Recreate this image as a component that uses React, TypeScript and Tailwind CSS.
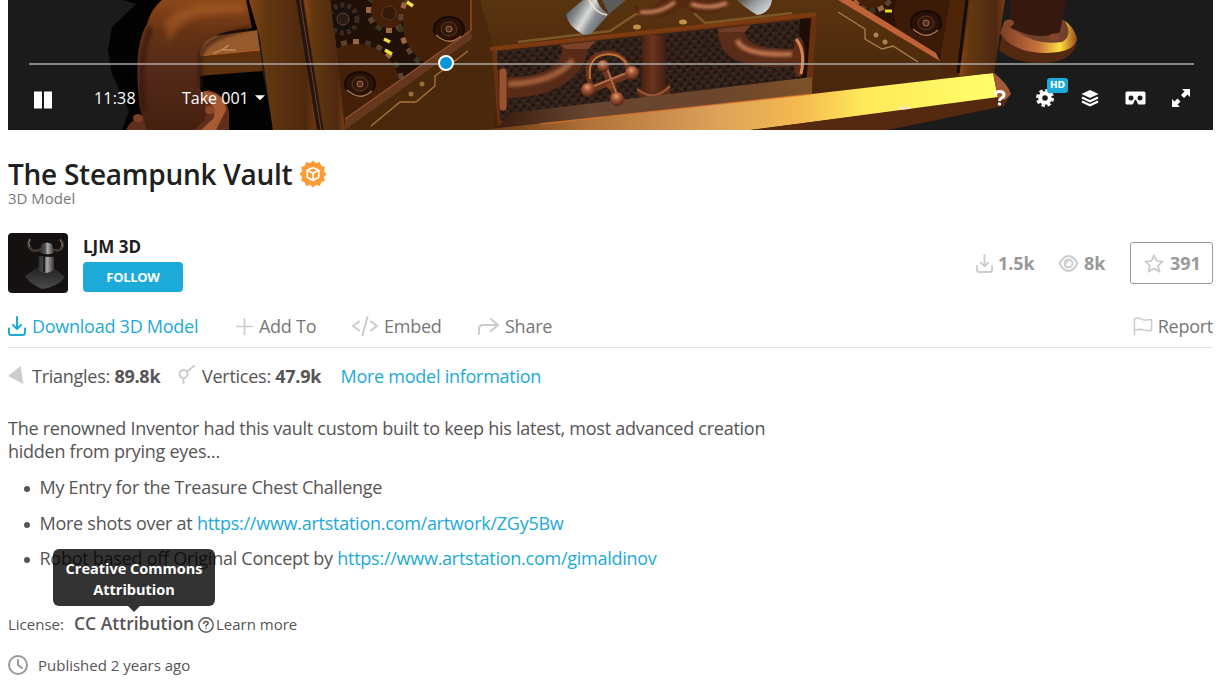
import type { ReactNode } from "react";

const links = {
  artwork: "https://www.artstation.com/artwork/ZGy5Bw",
  artist: "https://www.artstation.com/gimaldinov",
};

function Gear({ cx, cy, r, teeth }: { cx: number; cy: number; r: number; teeth: number }) {
  return (
    <g>
      {Array.from({ length: teeth }, (_, i) => (
        <rect
          key={i}
          x={cx - 3}
          y={cy - r - 5}
          width="6"
          height="9"
          fill={i % 3 === 0 ? "#9a6543" : i % 3 === 1 ? "#39351f" : "#5c4230"}
          transform={`rotate(${(360 / teeth) * i} ${cx} ${cy})`}
        />
      ))}
      <circle cx={cx} cy={cy} r={r} fill="#442009" />
    </g>
  );
}

function Bolt({ cx, cy }: { cx: number; cy: number }) {
  return (
    <g>
      <ellipse cx={cx} cy={cy} rx="15" ry="12" fill="#2a1208" stroke="#160a04" strokeWidth="2" />
      <path d={`M${cx - 13} ${cy + 6}Q${cx} ${cy + 18} ${cx + 12} ${cy + 7}`} fill="none" stroke="#b27649" strokeWidth="1.5" />
      <ellipse cx={cx} cy={cy} rx="8" ry="7" fill="#33180c" stroke="#5c3822" />
      <circle cx={cx} cy={cy} r="3" fill="#543020" stroke="#a16b4b" />
    </g>
  );
}

// Rendered frame of the vault
function VaultScene() {
  return (
    <svg className="block h-[130px] w-full" viewBox="8 0 1205 130" preserveAspectRatio="none" aria-hidden="true">
      <defs>
        <linearGradient id="pipe" x1="0" x2="1">
          <stop offset="0" stopColor="#3d1a0e" />
          <stop offset=".45" stopColor="#6b351d" />
          <stop offset="1" stopColor="#32160d" />
        </linearGradient>
        <linearGradient id="elbow" x1="0" y1="0" x2="0" y2="1">
          <stop offset="0" stopColor="#8c4719" />
          <stop offset=".25" stopColor="#653214" />
          <stop offset=".55" stopColor="#542a1a" />
          <stop offset="1" stopColor="#45200f" />
        </linearGradient>
        <linearGradient id="panel" x1="0" y1="0" x2="0" y2="1">
          <stop offset="0" stopColor="#593411" />
          <stop offset="1" stopColor="#432108" />
        </linearGradient>
        <linearGradient id="column" x1="0" x2="1">
          <stop offset="0" stopColor="#8a4315" />
          <stop offset=".2" stopColor="#65390f" />
          <stop offset=".8" stopColor="#4d290f" />
          <stop offset="1" stopColor="#7c3d12" />
        </linearGradient>
        <linearGradient id="plate" x1="480" x2="1000" y1="0" y2="0" gradientUnits="userSpaceOnUse">
          <stop offset="0" stopColor="#5e310f" />
          <stop offset=".2" stopColor="#b07038" />
          <stop offset=".45" stopColor="#dca05a" />
          <stop offset=".62" stopColor="#f6bb50" />
          <stop offset=".74" stopColor="#ffe95a" />
          <stop offset="1" stopColor="#ffff6a" />
        </linearGradient>
        <linearGradient id="ledge" x1="0" x2="1">
          <stop offset="0" stopColor="#3a1c0d" />
          <stop offset=".3" stopColor="#684632" />
          <stop offset=".7" stopColor="#6d452c" />
          <stop offset="1" stopColor="#7c5227" />
        </linearGradient>
        <linearGradient id="steel" x1="568" y1="8" x2="602" y2="28" gradientUnits="userSpaceOnUse">
          <stop offset="0" stopColor="#55585a" />
          <stop offset=".25" stopColor="#898d90" />
          <stop offset=".5" stopColor="#dadbd8" />
          <stop offset=".7" stopColor="#8a8e92" />
          <stop offset="1" stopColor="#63666a" />
        </linearGradient>
        <linearGradient id="steelRight" x1="0" x2="1" y1="0" y2=".5">
          <stop offset="0" stopColor="#5b4e40" />
          <stop offset=".5" stopColor="#9a9fa3" />
          <stop offset="1" stopColor="#d5d7d8" />
        </linearGradient>
        <linearGradient id="flange" x1="0" x2="1">
          <stop offset="0" stopColor="#7a3c26" />
          <stop offset=".5" stopColor="#c9733e" />
          <stop offset=".78" stopColor="#ffdf43" />
          <stop offset="1" stopColor="#9a481d" />
        </linearGradient>
        <radialGradient id="knob" cx=".45" cy=".3" r=".7">
          <stop offset="0" stopColor="#e79c70" />
          <stop offset=".4" stopColor="#a5583a" />
          <stop offset="1" stopColor="#4d2111" />
        </radialGradient>
        <pattern id="mesh" width="9" height="9" patternUnits="userSpaceOnUse" patternTransform="rotate(-6)">
          <rect width="9" height="9" fill="#30201a" />
          <circle cx="2" cy="2.500" r="1.600" fill="#1f130e" />
          <circle cx="6.500" cy="7" r="1.600" fill="#1f130e" />
          <path d="M0 5L2 7L4 5M5 1L6.500 2.500L8.500 .5" stroke="#4b3223" fill="none" />
        </pattern>
        <clipPath id="leftRoom"><path d="M330 0H472V32L346 120Z" /></clipPath>
        <clipPath id="rightRoom"><path d="M851 0H956L942 60L936 53Z" /></clipPath>
        <filter id="soft" x="-30%" y="-60%" width="160%" height="220%"><feGaussianBlur stdDeviation="3" /></filter>
        <filter id="sheen" x="-20%" y="-40%" width="140%" height="180%"><feGaussianBlur stdDeviation="1.5" /></filter>
      </defs>

      <rect x="8" width="1205" height="130" fill="#1b1b1b" />
      <path d="M123 0L136 4L112 27L108 50L112 74L129 111L122 130H240L262 0Z" fill="#030303" />
      <path d="M200 74L262 68L273 130H222Z" fill="#030303" />

      {/* left pipe and its flange */}
      <path d="M198 38L257 30L260 50L198 57Z" fill="#975a2d" />
      <path d="M198 56L260 50L263 71L198 76Z" fill="#5d300e" />
      <path d="M198 56L260 50" stroke="#b85f22" />
      <path d="M213 53Q220 52 229 45M223 50H236" stroke="#c58a5c" strokeWidth="1.500" fill="none" />
      <path d="M126 130Q130 120 142 116L208 90Q226 94 229 111L229 130Z" fill="#5f2f1c" />
      <path d="M204 91Q225 93 226 110L216 130H201L214 118Q216 103 203 99Z" fill="#a85a33" />
      <path d="M162 0H246L252 28C217 32 201 38 200 55V88Q207 104 205 120L194 130H147L140 109C137 80 134 45 147 24Q151 9 162 0Z" fill="url(#elbow)" />
      <path d="M164 22Q180 6 204 4L246 4V12L205 15Q180 18 169 43Z" fill="#ba6b2d" opacity=".45" filter="url(#soft)" />
      <path d="M144 112Q137 60 151 27" stroke="#331509" strokeWidth="6" fill="none" opacity=".6" filter="url(#sheen)" />
      <path d="M200 88V58Q202 38 250 28" stroke="#331509" strokeWidth="5" fill="none" opacity=".6" filter="url(#sheen)" />
      <ellipse cx="210" cy="110" rx="5" ry="4" fill="#8c4527" />
      <ellipse cx="138" cy="118" rx="5" ry="4" fill="#7e3e27" />

      {/* vault front */}
      <path d="M249 0H1004L994 75L1010 97L860 130H273L260 38Z" fill="url(#panel)" />
      <path d="M249 0H296L320 130H273L260 38Z" fill="url(#column)" />
      <path d="M296 0H303L323 130H317Z" fill="#29150e" />
      <path d="M300 0L321 130" stroke="#634637" />
      <path d="M304 0H329L345 130H324Z" fill="url(#column)" />

      {/* left clockwork */}
      <g clipPath="url(#leftRoom)">
        <path d="M330 0H472V32L346 120Z" fill="#211008" />
        <Gear cx={389} cy={10} r={18} teeth={12} />
        <circle cx="389" cy="13" r="7" fill="#351a0c" stroke="#5b351f" />
        <Gear cx={356} cy={88} r={44} teeth={24} />
        <Gear cx={450} cy={23} r={47} teeth={26} />
        <circle cx="343" cy="19" r="14" fill="#18100c" stroke="#3c2a20" strokeWidth="5" strokeDasharray="4 3" />
        <circle cx="343" cy="19" r="6" fill="#2d1c15" stroke="#65442e" />
        <Bolt cx={360} cy={84} />
        <Bolt cx={449} cy={29} />
        <path d="M384 39L390 42M385 50L392 54M407 2L413 6" stroke="#ede13b" strokeWidth="3.500" />
      </g>
      <path d="M470 0V32L345 119V130H495V52L480 0Z" fill="#49280c" />
      <path d="M471 0V31" stroke="#82401b" strokeWidth="2" />
      <path d="M470 31L345 119V130L473 38Z" fill="#65371c" />
      <path d="M470 31L345 119" stroke="#8f512b" strokeWidth="1.500" />
      <path d="M468 51L435 76V86L416 102H400L371 126" fill="none" stroke="#a9753b" strokeWidth="1.300" />
      <circle cx="422" cy="84" r="2.500" fill="#9d6b37" />
      <circle cx="411" cy="94" r="2.500" fill="#9d6b37" />

      {/* recessed mesh */}
      <path d="M492 50L817 14L812 90L498 128Z" fill="#6a310e" />
      <path d="M497 51L806 19L806 86L500 121Z" fill="url(#mesh)" />
      <path d="M800 19L811 18L806 88L797 80Z" fill="#1d0e07" />
      <path d="M490 49L816 14" stroke="#7d3b11" strokeWidth="4" fill="none" />
      <path d="M518 42L610 31L636 14H650M694 13L705 23L792 13" fill="none" stroke="#7d5726" strokeWidth="2.500" />
      <ellipse cx="637" cy="27" rx="4" ry="2.500" fill="#c09149" />
      <ellipse cx="683" cy="22" rx="4" ry="2.500" fill="#c09149" />

      <path d="M562 46H588C587 76 556 98 506 98V77C542 77 563 68 562 46Z" fill="#582b18" />
      <path d="M508 84Q554 83 573 60" stroke="#c27748" strokeWidth="6" fill="none" opacity=".65" filter="url(#sheen)" />
      <path d="M560 45L596 41L588 49H566Z" fill="#7b4229" />
      <rect x="499" y="68" width="8" height="43" rx="4" fill="#99522f" stroke="#582812" />
      <path d="M642 35H666V82Q672 90 670 98Q653 108 638 96Q636 90 642 84Z" fill="url(#pipe)" />
      <path d="M637 87Q654 100 670 84V95Q654 109 637 94Z" fill="#5f2c17" />
      <path d="M637 89Q654 103 670 86" stroke="#9b5738" strokeWidth="2" fill="none" />
      <path d="M718 29H744C744 42 755 49 794 49V66C746 70 718 61 718 29Z" fill="#5a2c1a" />
      <path d="M737 40Q743 56 792 54" stroke="#dc8a5c" strokeWidth="5" fill="none" opacity=".75" filter="url(#sheen)" />
      <path d="M717 29L751 25L745 32H720Z" fill="#713b25" />
      <ellipse cx="799" cy="57" rx="6" ry="20" fill="#612d16" />
      <path d="M796 39Q806 51 801 74" stroke="#d68455" strokeWidth="3" fill="none" />
      <path d="M510 113L812 77V99L495 130Z" fill="url(#ledge)" />

      {/* valve wheel */}
      <path d="M591 86Q580 54 609 53Q626 54 630 74" fill="none" stroke="#6d321b" strokeWidth="5" />
      <path d="M590 79Q587 55 609 54Q623 55 627 65" fill="none" stroke="#bd7434" strokeWidth="2" />
      <path d="M589 90L631 74M604 67L617 98" stroke="#6d341e" strokeWidth="7" />
      <path d="M589 88L629 72M606 66L617 95" stroke="#b4694a" strokeWidth="2" />
      <circle cx="610" cy="86" r="3" fill="#90421f" />
      <circle cx="603" cy="66" r="6" fill="url(#knob)" />
      <circle cx="632" cy="73" r="7" fill="url(#knob)" />
      <circle cx="588" cy="90" r="7" fill="url(#knob)" />
      <circle cx="617" cy="99" r="7" fill="url(#knob)" />

      {/* steel arms */}
      <path d="M602 0H626L609 14Z" fill="#5c5b59" />
      <path d="M583 0H597Q601 11 609 14L592 33Q587 36 582 34Q567 25 566 14Z" fill="url(#steel)" />
      <path d="M589 0Q596 14 607 15" stroke="#f1e4d0" strokeWidth="1.500" fill="none" />
      <path d="M737 0H772Q770 13 757 15Q744 7 737 0Z" fill="url(#steelRight)" />
      <path d="M634 5Q648 13 661 0H730Q726 14 704 14Q690 13 684 6Q665 22 641 16Q634 12 634 5Z" fill="#54290f" />
      <path d="M640 12Q660 14 675 2M691 4Q708 10 727 3" stroke="#c67e5b" strokeWidth="4" fill="none" filter="url(#sheen)" />

      {/* lower front plate */}
      <path d="M480 130L812 94L993 73L998 98L750 130Z" fill="url(#plate)" />
      <path d="M540 124L812 94" stroke="#d9732c" strokeWidth="1.500" opacity=".7" />
      <path d="M750 130L998 97L1010 95L1004 106L888 130Z" fill="#55290f" />
      <path d="M993 72Q1008 84 1011 94L1005 100L998 98Z" fill="#a05a37" />
      <ellipse cx="904" cy="108" rx="7" ry="1.500" fill="#ffe2c0" />

      {/* right clockwork */}
      <path d="M850 0H964L957 73L940 60Z" fill="#2b1307" />
      <g clipPath="url(#rightRoom)">
        <Gear cx={872} cy={-10} r={18} teeth={14} />
        <circle cx="934" cy="14" r="40" fill="#3b1a08" />
        <Bolt cx={926} cy={23} />
        <path d="M885 11H892" stroke="#e2de27" strokeWidth="3" />
      </g>
      <path d="M838 0H851L936 53L940 61Z" fill="#bf6238" />
      <path d="M838 12L865 29V39L882 49L893 46L918 62" fill="none" stroke="#a9824b" strokeWidth="1.300" />
      <circle cx="876" cy="35" r="2.500" fill="#aa8551" />
      <circle cx="885" cy="42" r="2.500" fill="#aa8551" />
      <path d="M950 0H967L958 74L944 76L940 60Z" fill="#4d260a" />
      <path d="M971 0H1005L994 73L959 76Z" fill="url(#column)" />
      <path d="M967 0L958 73" stroke="#160c07" strokeWidth="3" />

      {/* right pipe foot */}
      <path d="M1003 30L999 50Q1015 64 1045 63Q1076 61 1077 39Z" fill="#532911" />
      <path d="M1004 22L1000 33Q1012 53 1047 53Q1076 52 1077 38Q1073 25 1063 20Z" fill="url(#flange)" />
      <path d="M1005 22Q1030 47 1062 42Q1074 35 1064 20Z" fill="#714229" />
      <path d="M1010 0H1066L1060 32Q1045 39 1026 34L1011 28Z" fill="#36180f" />
      <ellipse cx="1009" cy="23" rx="5" ry="3.500" fill="#87452e" />
      <ellipse cx="1054" cy="37" rx="5" ry="3.500" fill="#87452e" />
    </svg>
  );
}

function PlayerControls() {
  return (
    <div className="absolute inset-x-0 top-[54px] h-[76px] text-white">
      <div className="mr-[19px] ml-[21px] flex h-[20px] items-center">
        <div className="relative h-[2px] w-full bg-[#aaa]/75">
          <span className="absolute top-[-8px] left-[409px] h-[16px] w-[16px] rounded-full border-2 border-white bg-[#0896d8]" />
        </div>
      </div>
      <div className="flex h-[48px] items-center pr-[23px] pl-[26px] text-[16px]">
        <svg className="mt-[4px] h-[18px] w-[18px]" viewBox="0 0 18 18" fill="currentColor">
          <path d="M0 .5H8V17.500H0ZM10 .5H18V17.500H10Z" />
        </svg>
        <span className="ml-[42px] w-[88px] tracking-[0.2px]">11:38</span>
        <span>Take 001</span>
        <svg className="ml-[6px] h-[6px] w-[10px]" viewBox="0 0 11 6" fill="currentColor">
          <path d="M0 0H11L5.500 5.500Z" />
        </svg>
        <div className="ml-auto flex items-center">
          <svg className="h-[18px] w-[12px]" viewBox="0 0 12 18" fill="none" stroke="currentColor">
            <path d="M1.500 6Q1.500 2.500 5.500 2.500Q10 2.500 10 6Q10 8 7 9.500Q5.500 10.500 5.500 12" strokeWidth="3" />
            <circle cx="5.500" cy="15" r="1.700" fill="currentColor" stroke="none" />
          </svg>
          <span className="relative ml-[30px]">
            <svg className="h-[18px] w-[18px]" viewBox="0 0 18 18" fill="none" stroke="currentColor">
              <circle cx="9" cy="9" r="4.800" strokeWidth="4" />
              <circle cx="9" cy="9" r="7.700" strokeWidth="2.600" strokeDasharray="3.500 2.547" />
            </svg>
            <span className="absolute top-[-11px] left-[11px] flex h-[15px] w-[21px] items-center justify-center rounded-[3px] bg-[#1caad9] font-['DejaVu_Sans'] text-[9px] font-bold">
              HD
            </span>
          </span>
          <svg className="ml-[27px] h-[18px] w-[18px]" viewBox="0 0 18 18">
            <path d="M9 1L17.500 5L9 9L.500 5Z" fill="currentColor" />
            <path d="M1 8.500L9 12.200L17 8.500M1 12.500L9 16.200L17 12.500" fill="none" stroke="currentColor" strokeWidth="2.300" />
          </svg>
          <svg className="ml-[26px] h-[14px] w-[21px]" viewBox="0 0 21 14" fill="currentColor">
            <path fillRule="evenodd" d="M2 .5H19Q20.500 .5 20.500 2V12Q20.500 13.500 19 13.500H14Q13 13.500 12.500 12L11.500 9.500Q10.500 8 9.500 9.500L8.500 12Q8 13.500 7 13.500H2Q.500 13.500 .500 12V2Q.500 .5 2 .5ZM6 4.500A2.500 2.500 0 1 0 6 9.500A2.500 2.500 0 1 0 6 4.500M15 4.500A2.500 2.500 0 1 0 15 9.500A2.500 2.500 0 1 0 15 4.500" />
          </svg>
          <svg className="ml-[26px] h-[18px] w-[18px]" viewBox="0 0 18 18">
            <path d="M10 0H18V8L15.500 5.500L12 9L9 6L12.500 2.500ZM8 18H0V10L2.500 12.500L5.500 9.500L8.500 12.500L5.500 15.500Z" fill="currentColor" />
          </svg>
        </div>
      </div>
    </div>
  );
}

function Icon({ className, box = "0 0 20 20", children }: { className: string; box?: string; children: ReactNode }) {
  return (
    <svg className={className} viewBox={box} fill="none" stroke="currentColor" strokeWidth="2" strokeLinecap="round" strokeLinejoin="round" aria-hidden="true">
      {children}
    </svg>
  );
}

function DownloadIcon({ className }: { className: string }) {
  return (
    <Icon className={className} box="0 0 18 20">
      <path d="M9 1V13M5 9L9 13L13 9M1 12.500V16.500Q1 19 3.500 19H14.500Q17 19 17 16.500V12.500" />
    </Icon>
  );
}

function StaffPickBadge() {
  return (
    <svg className="ml-[7px] h-[28px] w-[28px]" viewBox="0 0 28 28" aria-label="Staff pick">
      <path
        d="M14 .5L17 3.200L20.800 2L22.300 5.700L26 7.200L24.800 11L27.500 14L24.800 17L26 20.800L22.300 22.300L20.800 26L17 24.800L14 27.500L11 24.800L7.200 26L5.700 22.300L2 20.800L3.200 17L.500 14L3.200 11L2 7.200L5.700 5.700L7.200 2L11 3.200Z"
        fill="#ff9b35"
      />
      <path d="M14 7.700L19.800 10.200V17.300L14 20.400L8.200 17.300V10.200ZM8.200 10.200L14 13.200L19.800 10.200M14 13.200V20.400" fill="none" stroke="#fff" strokeWidth="1.700" strokeLinejoin="round" />
    </svg>
  );
}

function Avatar() {
  return (
    <svg className="h-[60px] w-[60px] rounded-[4px]" viewBox="0 0 60 60" aria-hidden="true">
      <defs>
        <linearGradient id="helmet" x1="0" x2="1">
          <stop offset="0" stopColor="#2b2c2c" />
          <stop offset=".4" stopColor="#4b4d4e" />
          <stop offset=".57" stopColor="#aaa" />
          <stop offset="1" stopColor="#333" />
        </linearGradient>
        <linearGradient id="cape" x1="0" y1="0" x2="0" y2="1">
          <stop offset="0" stopColor="#222" />
          <stop offset="1" stopColor="#4a4b4a" />
        </linearGradient>
      </defs>
      <rect width="60" height="60" fill="#151110" />
      <path d="M22 6Q18 13 24 17Q28 19 33 16M52 6Q57 12 53 16Q49 19 44 16" fill="none" stroke="#453a33" strokeWidth="2.500" />
      <path d="M22 6Q19 10 22 14M52 7Q55 10 54 14" fill="none" stroke="#85776b" />
      <path d="M28 35L17 43Q22 51 34 56Q50 54 57 44L46 35Z" fill="url(#cape)" />
      <path d="M31 23L46 24V37Q38 43 30 37Z" fill="url(#helmet)" />
      <path d="M34 11Q38 8 44 11L46 20Q38 23 31 19Z" fill="url(#helmet)" />
      <path d="M29 21Q38 24 47 22M36 23V39" stroke="#101010" strokeWidth="1.500" fill="none" />
    </svg>
  );
}

function ModelHeader() {
  return (
    <header>
      <div className="mt-[26px] flex h-[36px] items-center">
        <h1 className="text-[28px] leading-[32px] font-semibold tracking-[-0.26px] whitespace-nowrap text-[#202020]">The Steampunk Vault</h1>
        <StaffPickBadge />
      </div>
      <p className="mt-[-4px] h-[20px] text-[15px] leading-[20px] text-[#777]">3D Model</p>
      <div className="mt-[25px] flex h-[60px]">
        <Avatar />
        <div className="ml-[15px]">
          <p className="mt-[3px] h-[22px] text-[17px] leading-[22px] font-bold text-[#202020]">LJM 3D</p>
          <button className="mt-[4px] block h-[30px] w-[100px] rounded-[4px] bg-[#1caad9] pt-px text-[13px] font-bold tracking-[-0.3px] text-white">FOLLOW</button>
        </div>
        <div className="mt-[9px] ml-auto flex h-[42px] items-center text-[18px] font-bold tracking-[-0.1px] text-[#999]">
          <DownloadIcon className="mr-[5px] h-[19px] w-[17px] text-[#ccc]" />
          <span className="w-[60px]">1.5k</span>
          <Icon className="mr-[5px] h-[17px] w-[21px] text-[#ccc]" box="0 0 20 17">
            <path d="M1 8.500Q5 1 10 1T19 8.500Q15 16 10 16T1 8.500Z" />
            <circle cx="10" cy="8.500" r="4" />
            <path d="M8 8.500Q8 6.500 10 6.500" strokeWidth="1.200" />
          </Icon>
          <span className="w-[46px]">8k</span>
          <button className="flex h-[42px] w-[83px] items-center rounded-[3px] border border-[#999] pl-[13px]">
            <Icon className="mr-[6px] h-[19px] w-[20px] text-[#ccc]">
              <path d="M10 1.500L12.700 7.200L19 8L14.300 12.200L15.600 18.500L10 15.300L4.400 18.500L5.700 12.200L1 8L7.300 7.200Z" />
            </Icon>
            391
          </button>
        </div>
      </div>
    </header>
  );
}

function ActionBar() {
  return (
    <nav className="mt-[12px] flex h-[43px] items-center border-b border-[#e5e5e5] text-[18px] tracking-[-0.26px] whitespace-nowrap text-[#777]">
      <a className="flex w-[228px] items-center text-[#1caad9]">
        <DownloadIcon className="mr-[6px] h-[20px] w-[18px]" />
        Download 3D Model
      </a>
      <a className="flex w-[116px] items-center">
        <Icon className="mr-[6px] h-[17px] w-[17px] text-[#ccc]">
          <path d="M10 1V19M1 10H19" />
        </Icon>
        Add To
      </a>
      <a className="flex w-[126px] items-center">
        <Icon className="mr-[6px] h-[20px] w-[26px] text-[#ccc]" box="0 0 26 20">
          <path d="M7 5.500L1 10L7 14.500M15.500 1L10.500 19M19 5.500L25 10L19 14.500" />
        </Icon>
        Embed
      </a>
      <a className="flex items-center">
        <Icon className="mr-[6px] h-[19px] w-[21px] text-[#ccc]" box="0 0 21 19">
          <path d="M1 17V12Q1 8 5 8H20M13 2L20 8L13 14" />
        </Icon>
        Share
      </a>
      <a className="ml-auto flex items-center">
        <Icon className="mr-[5px] h-[19px] w-[20px] text-[#ccc]">
          <path d="M1 19V2Q4 0 8 2T14 3H19V14Q16 15 12 14T6 13L1 14" strokeWidth="1.600" />
        </Icon>
        Report
      </a>
    </nav>
  );
}

export default function App() {
  return (
    <main className="h-[684px] overflow-hidden bg-white pr-[9px] pl-[8px] font-['Open_Sans',sans-serif] text-[#555]">
      <section className="relative h-[130px] overflow-hidden">
        <VaultScene />
        <PlayerControls />
      </section>
      <ModelHeader />
      <ActionBar />

      <section className="mt-[16px] flex h-[25px] items-center text-[18px] tracking-[-0.26px] whitespace-nowrap">
        <svg className="mr-[8px] mb-[4px] h-[20px] w-[16px] text-[#ccc]" viewBox="0 0 16 20" fill="currentColor">
          <path d="M0 11L12.500 1L15.500 19Z" />
        </svg>
        <span className="w-[146px]">Triangles: <b>89.8k</b></span>
        <Icon className="mr-[7px] mb-[4px] h-[19px] w-[17px] text-[#ccc]" box="0 0 17 19">
          <circle cx="5.500" cy="9" r="4" />
          <path d="M5.500 13V18M9 6.500L16 1" />
        </Icon>
        <span className="w-[138.500px]">Vertices: <b>47.9k</b></span>
        <a className="text-[#1caad9]">More model information</a>
      </section>

      <article className="mt-[28px] h-[153px] w-[780px] text-[18px] leading-[23px] tracking-[-0.26px] whitespace-nowrap">
        <p>
          The renowned Inventor had this vault custom built to keep his latest, most advanced creation
          <br />
          hidden from prying eyes…
        </p>
        <ul className="mt-[13px] space-y-[12.500px]">
          {[
            <>My Entry for the Treasure Chest Challenge</>,
            <>More shots over at <a className="text-[#1caad9]">{links.artwork}</a></>,
            <>Robot based off Original Concept by <a className="text-[#1caad9]">{links.artist}</a></>,
          ].map((item, i) => (
            <li key={i} className="flex items-center">
              <span className="mt-[3px] mr-[9.500px] ml-[16px] h-[6px] w-[6px] rounded-full bg-[#555]" />
              <span>{item}</span>
            </li>
          ))}
        </ul>
      </article>

      <footer className="mt-[43px] text-[15px]">
        <div className="flex h-[22px] items-center whitespace-nowrap">
          <span className="w-[66px]">License:</span>
          <span className="relative mt-[-1px] w-[120px] text-[17.500px] font-semibold">
            CC Attribution
            <span className="absolute bottom-[31px] left-[-21px] flex h-[57px] w-[162px] flex-col items-center justify-center rounded-[6px] bg-black/80 pt-[3px] text-[14.500px] leading-[21px] font-bold text-white">
              <span>Creative Commons</span>
              <span>Attribution</span>
              <svg className="absolute top-[57px] left-[75px] h-[6px] w-[12px]" viewBox="0 0 12 6">
                <path d="M0 0H12L6 6Z" fill="#333" />
              </svg>
            </span>
          </span>
          <Icon className="mt-px mr-[2px] ml-[4px] h-[16px] w-[16px]" box="0 0 16 16">
            <circle cx="8" cy="8" r="7.200" strokeWidth="1.400" />
            <path d="M5.800 6.500Q6 4.500 8 4.500T10.200 6.200Q10.200 7.200 8.800 7.800Q8 8.200 8 9.300M8 11.500V11.600" strokeWidth="1.500" />
          </Icon>
          <a>Learn more</a>
        </div>
        <div className="mt-[19px] flex h-[22px] items-center">
          <Icon className="mr-[10px] h-[20px] w-[20px] text-[#999]">
            <circle cx="10" cy="10" r="9" />
            <path d="M10 5V10L14 13" />
          </Icon>
          Published 2 years ago
        </div>
      </footer>
    </main>
  );
}
